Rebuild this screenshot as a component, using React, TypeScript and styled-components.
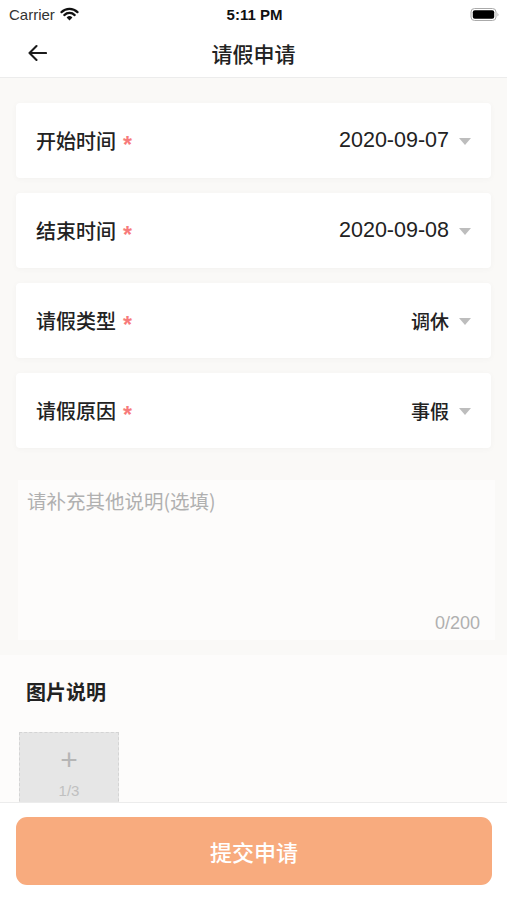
import React from "react";
import styled, { createGlobalStyle } from "styled-components";

const Global = createGlobalStyle`
  html, body { margin: 0; padding: 0; }
  body { font-family: "Liberation Sans", "Noto Sans CJK SC", sans-serif; background: #fff; }
  * { box-sizing: border-box; }
`;

const Screen = styled.div`
  width: 507px;
  height: 900px;
  display: flex;
  flex-direction: column;
  background: #fff;
  overflow: hidden;
`;

const StatusBar = styled.div`
  height: 28px;
  flex: none;
  display: grid;
  grid-template-columns: 1fr auto 1fr;
  align-items: center;
  padding: 0 7px 0 9px;
  font-size: 15px;
  color: #111;
`;

const Carrier = styled.div`
  display: flex;
  align-items: center;
  gap: 5px;
  color: #333;
`;

const Time = styled.div`
  font-weight: 700;
  color: #111;
`;

const BatteryWrap = styled.div`
  justify-self: end;
  display: flex;
  align-items: center;
`;

const NavBar = styled.div`
  height: 50px;
  flex: none;
  display: grid;
  grid-template-columns: 60px 1fr 60px;
  align-items: center;
  border-bottom: 1px solid #ececec;
`;

const BackBtn = styled.div`
  padding-left: 27px;
  display: flex;
  align-items: center;
`;

const Title = styled.div`
  text-align: center;
  font-size: 21px;
  font-weight: 500;
  color: #222;
  font-family: "Noto Sans CJK SC", sans-serif;
`;

const Main = styled.div`
  flex: 1;
  overflow: hidden;
  background: #faf9f7;
  display: flex;
  flex-direction: column;
`;

const Cards = styled.div`
  flex: none;
  padding: 25px 16px 0;
  display: flex;
  flex-direction: column;
  gap: 15px;
`;

const Card = styled.div`
  height: 75px;
  background: #fff;
  border-radius: 4px;
  box-shadow: 0 1px 6px rgba(0, 0, 0, 0.035);
  display: flex;
  align-items: center;
  justify-content: space-between;
  padding: 0 20px 0 20px;
`;

const Label = styled.div`
  font-family: "Noto Sans CJK SC", sans-serif;
  font-size: 20px;
  font-weight: 500;
  color: #222;
  display: flex;
  align-items: center;
`;

const Star = styled.span`
  color: #f77b7b;
  font-size: 23px;
  line-height: 1;
  margin-left: 7px;
  position: relative;
  top: 5px;
  font-family: "Liberation Sans", sans-serif;
  font-weight: 700;
`;

const ValueWrap = styled.div`
  display: flex;
  align-items: center;
  gap: 10px;
`;

const Value = styled.span<{ $cjk?: boolean }>`
  font-size: ${(p) => (p.$cjk ? "19px" : "21.5px")};
  color: #222;
  font-family: ${(p) =>
    p.$cjk ? `"Noto Sans CJK SC", sans-serif` : `"Liberation Sans", sans-serif`};
  font-weight: ${(p) => (p.$cjk ? 500 : 400)};
`;

const Caret = styled.span`
  width: 0;
  height: 0;
  border-left: 6px solid transparent;
  border-right: 6px solid transparent;
  border-top: 7px solid #bdbdbd;
  margin-top: 2px;
`;

const Remark = styled.div`
  flex: none;
  margin: 32px 12px 0 18px;
  height: 160px;
  background: #fdfcfb;
  display: flex;
  flex-direction: column;
  justify-content: space-between;
  padding: 6px 12px 6px 9px;
`;

const Placeholder = styled.div`
  font-family: "Noto Sans CJK SC", sans-serif;
  font-size: 19.5px;
  color: #b0b0b0;
`;

const Counter = styled.div`
  text-align: right;
  font-size: 18px;
  color: #b0b0b0;
  padding-right: 3px;
`;

const PicSection = styled.div`
  margin-top: 15px;
  flex: 1 0 auto;
  background: #fdfcfb;
  padding: 22px 19px 0;
  display: flex;
  flex-direction: column;
  gap: 26px;
`;

const PicTitle = styled.div`
  font-family: "Noto Sans CJK SC", sans-serif;
  font-size: 20px;
  font-weight: 700;
  color: #222;
  padding-left: 7px;
`;

const UploadBox = styled.div`
  width: 100px;
  height: 100px;
  flex: none;
  background: #e6e6e6;
  border: 1.5px dashed #d4d4d4;
  display: flex;
  flex-direction: column;
  align-items: center;
  padding-top: 12px;
  color: #bdbdbd;
`;

const Plus = styled.div`
  font-size: 30px;
  line-height: 30px;
  font-weight: 300;
  color: #b5b5b5;
`;

const Count = styled.div`
  font-size: 15px;
  margin-top: 7px;
  color: #c0c0c0;
`;

const Footer = styled.div`
  height: 98px;
  flex: none;
  background: #fff;
  border-top: 1px solid #ececec;
  padding: 14px 15px 0 16px;
`;

const SubmitBtn = styled.div`
  height: 68px;
  border-radius: 11px;
  background: #f8ab7e;
  display: flex;
  align-items: center;
  justify-content: center;
  color: #fff;
  font-family: "Noto Sans CJK SC", sans-serif;
  font-size: 22px;
  font-weight: 500;
`;

const rows = [
  { label: "开始时间", value: "2020-09-07", cjk: false },
  { label: "结束时间", value: "2020-09-08", cjk: false },
  { label: "请假类型", value: "调休", cjk: true },
  { label: "请假原因", value: "事假", cjk: true },
];

export default function App() {
  return (
    <>
      <Global />
      <Screen>
        <StatusBar>
          <Carrier>
            Carrier
            <svg width="19" height="14" viewBox="0 0 19 14">
              <path d="M9.5 13.5 L6.6 10.4 A4.2 4.2 0 0 1 12.4 10.4 Z" fill="#111" />
              <path d="M4.3 8.1 A7.4 7.4 0 0 1 14.7 8.1" stroke="#111" strokeWidth="2.2" fill="none" strokeLinecap="round" />
              <path d="M1.5 5.1 A11.3 11.3 0 0 1 17.5 5.1" stroke="#111" strokeWidth="2.2" fill="none" strokeLinecap="round" />
            </svg>
          </Carrier>
          <Time>5:11 PM</Time>
          <BatteryWrap>
            <svg width="30" height="15" viewBox="0 0 30 15">
              <rect x="1" y="1.5" width="25" height="12" rx="3.5" fill="none" stroke="#aaa" strokeWidth="1" />
              <rect x="2.8" y="3.3" width="21.4" height="8.4" rx="2" fill="#000" />
              <path d="M27.5 5.5 Q29.3 7.5 27.5 9.5 Z" fill="#aaa" />
            </svg>
          </BatteryWrap>
        </StatusBar>
        <NavBar>
          <BackBtn>
            <svg width="20" height="18" viewBox="0 0 20 18">
              <path d="M19 9 H2.5 M9.5 2 L2.5 9 L9.5 16" stroke="#1a1a1a" strokeWidth="2.1" fill="none" strokeLinecap="round" strokeLinejoin="round" />
            </svg>
          </BackBtn>
          <Title>请假申请</Title>
          <div />
        </NavBar>
        <Main>
          <Cards>
            {rows.map((r) => (
              <Card key={r.label}>
                <Label>
                  {r.label}
                  <Star>*</Star>
                </Label>
                <ValueWrap>
                  <Value $cjk={r.cjk}>{r.value}</Value>
                  <Caret />
                </ValueWrap>
              </Card>
            ))}
          </Cards>
          <Remark>
            <Placeholder>请补充其他说明(选填)</Placeholder>
            <Counter>0/200</Counter>
          </Remark>
          <PicSection>
            <PicTitle>图片说明</PicTitle>
            <UploadBox>
              <Plus>+</Plus>
              <Count>1/3</Count>
            </UploadBox>
          </PicSection>
        </Main>
        <Footer>
          <SubmitBtn>提交申请</SubmitBtn>
        </Footer>
      </Screen>
    </>
  );
}
